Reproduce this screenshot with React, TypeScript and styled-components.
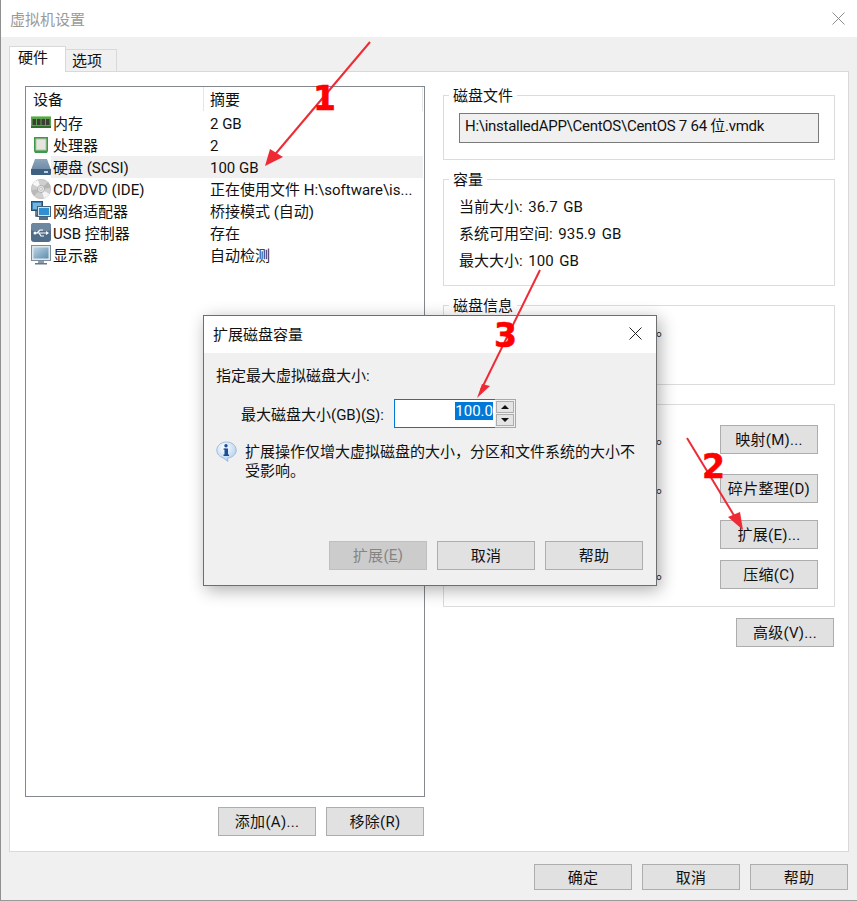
import React from 'react';
import styled, { createGlobalStyle } from 'styled-components';

const GlobalStyle = createGlobalStyle`
  html, body {
    margin: 0;
    padding: 0;
    background: #fff;
  }
  * {
    box-sizing: border-box;
  }
  body {
    font-family: Roboto, "Noto Sans CJK SC", sans-serif;
    font-size: 15px;
    color: #111;
  }
`;

const RamIcon = () => (
  <svg width="20" height="14" viewBox="0 0 20 14">
    <rect x="0" y="1" width="20" height="10" fill="#5aa64e" />
    <rect x="0" y="10" width="20" height="2" fill="#2f6f2c" />
    <rect x="1.500" y="3" width="3.500" height="6" fill="#3d3d33" />
    <rect x="6" y="3" width="3.500" height="6" fill="#3d3d33" />
    <rect x="10.500" y="3" width="3.500" height="6" fill="#3d3d33" />
    <rect x="15" y="3" width="3.500" height="6" fill="#3d3d33" />
    <rect x="0" y="0" width="20" height="1" fill="#9ccf8f" />
  </svg>
);

const CpuIcon = () => (
  <svg width="20" height="18" viewBox="0 0 20 18">
    <path d="M3 1h14v14l-1 2H4l-1-2z" fill="#3f9a48" />
    <rect x="5" y="3" width="10" height="11" fill="#e6e6df" stroke="#b6c4ae" />
  </svg>
);

const DiskIcon = () => (
  <svg width="20" height="18" viewBox="0 0 20 18">
    <defs>
      <linearGradient id="diskTop" x1="0" y1="0" x2="0" y2="1">
        <stop offset="0" stopColor="#8ea6bd" />
        <stop offset="1" stopColor="#6e8aa6" />
      </linearGradient>
    </defs>
    <path d="M4 1h12l4 11H0z" fill="url(#diskTop)" />
    <path d="M0 11h20v5a1 1 0 0 1-1 1H1a1 1 0 0 1-1-1z" fill="#3f5f80" />
    <rect x="13" y="13" width="4" height="2" fill="#b9d0e2" />
  </svg>
);

const CdIcon = () => (
  <svg width="20" height="20" viewBox="0 0 20 20">
    <circle cx="10" cy="10" r="9.700" fill="#cfcfcf" stroke="#b0b0b0" strokeWidth="0.600" />
    <path d="M10 10L1.500 5A9.700 9.700 0 0 1 7 1z" fill="#f7f7f7" />
    <path d="M10 10L18.500 15A9.700 9.700 0 0 1 13 19z" fill="#f4f4f4" />
    <path d="M10 10L17 3A9.700 9.700 0 0 1 19.600 9z" fill="#b4b4b4" />
    <path d="M10 10L3 17A9.700 9.700 0 0 1 .400 11z" fill="#b9b9b9" />
    <circle cx="10" cy="10" r="3.600" fill="#e4e4e4" stroke="#a0a0a0" strokeWidth="0.700" />
    <circle cx="10" cy="10" r="1.400" fill="#fff" stroke="#8f8f8f" strokeWidth="0.500" />
  </svg>
);

const NetworkIcon = () => (
  <svg width="20" height="20" viewBox="0 0 20 20">
    <rect x="0.500" y="0.500" width="11" height="9" fill="#3a7fb5" stroke="#2b4f6e" />
    <rect x="2" y="2" width="8" height="6" fill="#77b4dc" />
    <path d="M5 10v5h5" fill="none" stroke="#2b4f6e" strokeWidth="1.400" />
    <rect x="6.500" y="5.500" width="13" height="10" fill="#d5e4ef" stroke="#44617c" />
    <rect x="8" y="7" width="10" height="7" fill="#2f8fd0" />
    <rect x="8" y="16" width="9" height="3" fill="#54708a" />
  </svg>
);

const UsbIcon = () => (
  <svg width="20" height="20" viewBox="0 0 20 20">
    <rect x="0" y="0" width="20" height="19" rx="3" fill="#4f6d88" />
    <rect x="0" y="0" width="20" height="8" rx="3" fill="#6c879f" />
    <path d="M3 10h13M6 10l3-3h3M8 10l2 3h3" fill="none" stroke="#fff" strokeWidth="1.200" />
    <path d="M15 8l3 2-3 2z" fill="#fff" />
    <circle cx="4" cy="10" r="1.500" fill="#fff" />
  </svg>
);

const MonitorIcon = () => (
  <svg width="20" height="20" viewBox="0 0 20 20">
    <defs>
      <linearGradient id="screenFace" x1="0" y1="0" x2="1" y2="1">
        <stop offset="0" stopColor="#bcd4e4" />
        <stop offset="1" stopColor="#5f8eae" />
      </linearGradient>
    </defs>
    <rect x="0.500" y="0.500" width="19" height="15" fill="#dfe6ec" stroke="#7b8c9a" />
    <rect x="2.500" y="2.500" width="15" height="11" fill="url(#screenFace)" />
    <rect x="7" y="16" width="6" height="2" fill="#8d9ba7" />
    <rect x="4" y="18" width="12" height="1.500" fill="#64788a" />
  </svg>
);

const InfoIcon = () => (
  <svg width="21" height="21" viewBox="0 0 21 21">
    <defs>
      <radialGradient id="infoFace" cx="0.400" cy="0.300" r="0.800">
        <stop offset="0" stopColor="#ffffff" />
        <stop offset="1" stopColor="#a9c9ea" />
      </radialGradient>
    </defs>
    <path
      d="M10.500 1C5 1 .8 4.500.8 9.200c0 3.800 3 6.600 6.200 7.600l5 3.600-.5-3.300c4.800-.5 8.700-3.500 8.700-7.900C20.200 4.500 16 1 10.500 1z"
      fill="url(#infoFace)"
      stroke="#8fb2d6"
      strokeWidth="0.800"
    />
    <rect x="8.500" y="7.500" width="3.500" height="7" fill="#1b4f9c" />
    <rect x="7.500" y="13.500" width="5.500" height="1.500" fill="#1b4f9c" />
    <rect x="7.500" y="7.500" width="2" height="1.200" fill="#1b4f9c" />
    <circle cx="10" cy="4.800" r="1.700" fill="#1b4f9c" />
  </svg>
);

const CloseIcon: React.FC<{ color: string }> = ({ color }) => (
  <svg width="13" height="13" viewBox="0 0 13 13">
    <path d="M.5.500l12 12M12.500.500l-12 12" stroke={color} strokeWidth="1" fill="none" />
  </svg>
);

interface Device {
  id: string;
  name: string;
  summary: string;
  icon: React.ReactNode;
  selected?: boolean;
}

const devices: Device[] = [
  { id: 'ram', name: '内存', summary: '2 GB', icon: <RamIcon /> },
  { id: 'cpu', name: '处理器', summary: '2', icon: <CpuIcon /> },
  { id: 'disk', name: '硬盘 (SCSI)', summary: '100 GB', icon: <DiskIcon />, selected: true },
  { id: 'cd', name: 'CD/DVD (IDE)', summary: '正在使用文件 H:\\software\\is...', icon: <CdIcon /> },
  { id: 'net', name: '网络适配器', summary: '桥接模式 (自动)', icon: <NetworkIcon /> },
  { id: 'usb', name: 'USB 控制器', summary: '存在', icon: <UsbIcon /> },
  { id: 'screen', name: '显示器', summary: '自动检测', icon: <MonitorIcon /> },
];

const Annotations = () => (
  <ArrowLayer width="857" height="901" viewBox="0 0 857 901">
    <g stroke="#ee2b35" strokeWidth="2" fill="#ee2b35">
      <line x1="370" y1="42" x2="272" y2="158" />
      <line x1="687" y1="438" x2="738" y2="522" />
      <line x1="540" y1="270" x2="481" y2="390" />
    </g>
    <g fill="#ee2b35">
      <path d="M265 166l5-17 13 8z" />
      <path d="M743 530l-15-13 12-5z" />
      <path d="M477 398l5-14 8 2z" />
    </g>
  </ArrowLayer>
);

const App = () => {
  return (
    <Window>
      <GlobalStyle />
      <EdgeBleed />
      <TitleBar>
        <WindowTitle>虚拟机设置</WindowTitle>
        <CloseIcon color="#8c8c8c" />
      </TitleBar>
      <TabStrip>
        <Tab $active>硬件</Tab>
        <Tab>选项</Tab>
      </TabStrip>
      <Panel>
        <LeftColumn>
          <DeviceList>
            <HeaderRow>
              <HeaderCell $width={178}>设备</HeaderCell>
              <HeaderCell $width={219}>摘要</HeaderCell>
            </HeaderRow>
            {devices.map(device => (
              <DeviceRow key={device.id}>
                <IconSlot>{device.icon}</IconSlot>
                <DeviceBody $selected={device.selected}>
                  <span>{device.name}</span>
                  <span>{device.summary}</span>
                </DeviceBody>
              </DeviceRow>
            ))}
          </DeviceList>
          <ListActions>
            <Button>添加(A)...</Button>
            <Button>移除(R)</Button>
          </ListActions>
        </LeftColumn>
        <RightColumn>
          <Group $height={65}>
            <Legend>磁盘文件</Legend>
            <PathField>H:\installedAPP\CentOS\CentOS 7 64 位.vmdk</PathField>
          </Group>
          <Group $height={107}>
            <Legend>容量</Legend>
            <CapacityList>
              <div>当前大小: 36.7 GB</div>
              <div>系统可用空间: 935.9 GB</div>
              <div>最大大小: 100 GB</div>
            </CapacityList>
          </Group>
          <Group $height={80}>
            <Legend>磁盘信息</Legend>
            <InfoDot>。</InfoDot>
          </Group>
          <Group $height={203}>
            <ToolRow $top={20}>
              <ToolDot>。</ToolDot>
              <Button>映射(M)...</Button>
            </ToolRow>
            <ToolRow $top={20}>
              <ToolDot>。</ToolDot>
              <Button>碎片整理(D)</Button>
            </ToolRow>
            <ToolRow $top={17}>
              <Button>扩展(E)...</Button>
            </ToolRow>
            <ToolRow $top={11}>
              <ToolDot>。</ToolDot>
              <Button>压缩(C)</Button>
            </ToolRow>
          </Group>
          <AdvancedRow>
            <Button>高级(V)...</Button>
          </AdvancedRow>
        </RightColumn>
      </Panel>
      <Footer>
        <Button $short>确定</Button>
        <Button $short>取消</Button>
        <Button $short>帮助</Button>
      </Footer>

      <Dialog>
        <DialogTitle>
          <span>扩展磁盘容量</span>
          <CloseIcon color="#222" />
        </DialogTitle>
        <DialogBody>
          <div>指定最大虚拟磁盘大小:</div>
          <SizeRow>
            <SizeLabel>
              最大磁盘大小(GB)(<u>S</u>):
            </SizeLabel>
            <SizeInput>
              <Selected>100.0</Selected>
            </SizeInput>
            <Spinner>
              <SpinButton>
                <SpinUp />
              </SpinButton>
              <SpinButton>
                <SpinDown />
              </SpinButton>
            </Spinner>
          </SizeRow>
          <Notice>
            <InfoIcon />
            <NoticeText>扩展操作仅增大虚拟磁盘的大小，分区和文件系统的大小不受影响。</NoticeText>
          </Notice>
        </DialogBody>
        <DialogFooter>
          <Button $disabled>
            扩展(<u>E</u>)
          </Button>
          <Button>取消</Button>
          <Button>帮助</Button>
        </DialogFooter>
      </Dialog>

      <Annotations />
      <StepNumber $left={312} $top={79}>1</StepNumber>
      <StepNumber $left={701} $top={447}>2</StepNumber>
      <StepNumber $left={493} $top={316}>3</StepNumber>
    </Window>
  );
};

export default App;

const Window = styled.div`
  position: relative;
  width: 857px;
  height: 901px;
  overflow: hidden;
  display: flex;
  flex-direction: column;
  background: #f0f0f0;
  border-left: 1px solid #8f8f8f;
  border-bottom: 1px solid #9a9a9a;
`;

// the window behind shows through along the left edge
const EdgeBleed = styled.div`
  position: absolute;
  left: -1px;
  top: 760px;
  width: 1px;
  height: 84px;
  background: linear-gradient(
    to bottom,
    #4a5fa0 0 4px,
    #8f8f8f 4px 33px,
    #33384a 33px 48px,
    #8f8f8f 48px 55px,
    #7a2f30 55px 67px,
    #8f8f8f 67px 75px,
    #2c3f70 75px 82px,
    #8f8f8f 82px
  );
`;

const TitleBar = styled.div`
  height: 37px;
  flex: none;
  display: flex;
  align-items: center;
  justify-content: space-between;
  padding: 0 12px 0 9px;
  background: #fff;
`;

const WindowTitle = styled.span`
  color: #9a9a9a;
`;

const TabStrip = styled.div`
  height: 34px;
  flex: none;
  display: flex;
  align-items: flex-end;
  padding-left: 8px;
`;

const Tab = styled.div<{ $active?: boolean }>`
  position: relative;
  z-index: ${p => (p.$active ? 1 : 0)};
  width: ${p => (p.$active ? 57 : 52)}px;
  height: ${p => (p.$active ? 26 : 23)}px;
  margin-bottom: -1px;
  padding: ${p => (p.$active ? '0 0 0 8px' : '0 0 0 6px')};
  line-height: 22px;
  background: ${p => (p.$active ? '#fff' : '#f0f0f0')};
  border: 1px solid #d9d9d9;
  border-bottom: ${p => (p.$active ? 'none' : '1px solid #d9d9d9')};
  margin-left: ${p => (p.$active ? 0 : -1)}px;
`;

const Panel = styled.div`
  width: 840px;
  height: 781px;
  flex: none;
  margin-left: 8px;
  display: flex;
  background: #fff;
  border: 1px solid #d9d9d9;
`;

const LeftColumn = styled.div`
  width: 400px;
  margin: 14px 0 0 15px;
  display: flex;
  flex-direction: column;
`;

const DeviceList = styled.div`
  height: 711px;
  border: 1px solid #828790;
  background: #fff;
`;

const HeaderRow = styled.div`
  height: 25px;
  display: flex;
  padding-left: 0;
`;

const HeaderCell = styled.div<{ $width: number }>`
  width: ${p => p.$width}px;
  height: 24px;
  line-height: 26px;
  padding-left: ${p => (p.$width === 178 ? 7 : 6)}px;
  border-right: 1px solid #e5e5e5;
`;

const DeviceRow = styled.div`
  height: 22px;
  display: flex;
  padding: 0 1px 0 5px;
`;

const IconSlot = styled.div`
  width: 20px;
  flex: none;
  display: flex;
  align-items: center;
  justify-content: center;
`;

const DeviceBody = styled.div<{ $selected?: boolean }>`
  flex: 1;
  height: 22px;
  display: grid;
  grid-template-columns: 157px 1fr;
  align-content: start;
  padding: 1px 0 0 2px;
  line-height: 22px;
  white-space: nowrap;
  background: ${p => (p.$selected ? '#f0f0f0' : 'transparent')};
`;

const ListActions = styled.div`
  display: flex;
  justify-content: flex-end;
  gap: 10px;
  margin-top: 10px;
  padding-right: 1px;
`;

const RightColumn = styled.div`
  width: 392px;
  margin: 23px 0 0 18px;
  display: flex;
  flex-direction: column;
  gap: 19px;
`;

const Group = styled.div<{ $height: number }>`
  position: relative;
  height: ${p => p.$height}px;
  flex: none;
  border: 1px solid #dcdcdc;
`;

const Legend = styled.div`
  width: fit-content;
  height: 17px;
  margin: -10px 0 0 5px;
  padding: 0 4px;
  line-height: 20px;
  background: #fff;
`;

const PathField = styled.div`
  width: 360px;
  height: 30px;
  margin: 10px 0 0 15px;
  padding-left: 5px;
  line-height: 25px;
  letter-spacing: -0.27px;
  white-space: nowrap;
  background: #f0f0f0;
  border: 1px solid #7a7a7a;
`;

const CapacityList = styled.div`
  display: flex;
  flex-direction: column;
  gap: 5px;
  margin: 9px 0 0 15px;
  line-height: 22px;
  word-spacing: 2px;
`;

const InfoDot = styled.div`
  margin: 6px 0 0 212px;
  line-height: 22px;
  height: 22px;
`;

const ToolRow = styled.div<{ $top: number }>`
  display: flex;
  align-items: center;
  justify-content: flex-end;
  margin-top: ${p => p.$top}px;
  padding-right: 16px;
`;

const ToolDot = styled.span`
  margin-right: auto;
  margin-left: 212px;
  padding-bottom: 7px;
`;

const AdvancedRow = styled.div`
  display: flex;
  justify-content: flex-end;
  margin-top: -8px;
  margin-right: 1px;
`;

const Footer = styled.div`
  display: flex;
  justify-content: flex-end;
  gap: 10px;
  padding: 12px 9px 0 0;
`;

const Button = styled.div<{ $short?: boolean; $disabled?: boolean }>`
  width: 98px;
  height: ${p => (p.$short ? 26 : 29)}px;
  flex: none;
  display: flex;
  align-items: center;
  justify-content: center;
  padding-bottom: 2px;
  letter-spacing: 0.3px;
  white-space: pre;
  color: ${p => (p.$disabled ? '#858585' : '#111')};
  background: ${p => (p.$disabled ? '#cccccc' : '#e1e1e1')};
  border: 1px solid ${p => (p.$disabled ? '#bfbfbf' : '#adadad')};
`;

const Dialog = styled.div`
  position: absolute;
  left: 202px;
  top: 315px;
  width: 454px;
  height: 271px;
  display: flex;
  flex-direction: column;
  background: #f0f0f0;
  border: 1px solid #6e6e6e;
  box-shadow: 3px 4px 16px rgba(0, 0, 0, 0.32);
`;

const DialogTitle = styled.div`
  height: 37px;
  flex: none;
  display: flex;
  align-items: center;
  justify-content: space-between;
  padding: 0 14px 2px 9px;
  background: #fff;
`;

const DialogBody = styled.div`
  flex: 1;
  padding: 13px 12px 0;
  line-height: 20px;
`;

const SizeRow = styled.div`
  display: flex;
  align-items: stretch;
  height: 29px;
  margin: 13px 0 0 25px;
`;

const SizeLabel = styled.div`
  width: 153px;
  line-height: 32px;
  white-space: nowrap;
`;

const SizeInput = styled.div`
  width: 101px;
  display: flex;
  justify-content: flex-end;
  align-items: flex-start;
  padding: 2px 2px 0 0;
  background: #fff;
  border: 1px solid #0078d7;
  border-right: none;
`;

const Selected = styled.span`
  height: 18px;
  line-height: 18px;
  padding: 0;
  color: #fff;
  background: #0078d7;
`;

const Spinner = styled.div`
  width: 21px;
  display: flex;
  flex-direction: column;
  gap: 1px;
  padding: 1px;
  border: 1px solid #a8a8a8;
  border-left: none;
`;

const SpinButton = styled.div`
  flex: 1;
  display: flex;
  align-items: center;
  justify-content: center;
  background: #e4e4e4;
  border: 1px solid #adadad;
`;

const SpinUp = styled.div`
  width: 0;
  height: 0;
  border-left: 4px solid transparent;
  border-right: 4px solid transparent;
  border-bottom: 4px solid #111;
`;

const SpinDown = styled(SpinUp)`
  border-bottom: none;
  border-top: 4px solid #111;
`;

const Notice = styled.div`
  display: flex;
  align-items: flex-start;
  gap: 8px;
  margin-top: 13px;
`;

const NoticeText = styled.div`
  width: 392px;
  margin-top: 2px;
  line-height: 19px;
`;

const DialogFooter = styled.div`
  display: flex;
  justify-content: flex-end;
  gap: 10px;
  padding: 0 13px 15px 0;
`;

const ArrowLayer = styled.svg`
  position: absolute;
  left: -1px;
  top: 0;
  pointer-events: none;
`;

const StepNumber = styled.span<{ $left: number; $top: number }>`
  position: absolute;
  left: ${p => p.$left}px;
  top: ${p => p.$top}px;
  font-family: "DejaVu Sans", sans-serif;
  font-weight: 700;
  font-size: 33px;
  line-height: 40px;
  color: #f00;
  -webkit-text-stroke: 0.6px #f00;
`;
